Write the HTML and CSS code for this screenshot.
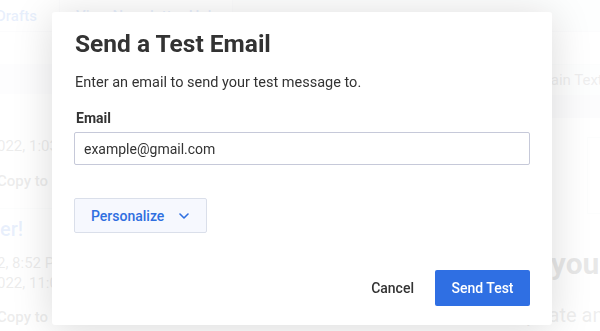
FILE: index.html
```html
<!DOCTYPE html>
<html lang="en">
<head>
    <meta charset="UTF-8">
    <meta name="viewport" content="width=device-width, initial-scale=1.0">
    <title>Send a Test Email</title>
    <link rel="stylesheet" href="styles.css">
</head>
<body>
    <div class="page">
        <div class="topbar">
            <div class="tab tab-active">Drafts</div>
            <div class="tab">View Newsletter Hub</div>
            <div class="topbar-rest"></div>
        </div>
        <div class="content">
            <div class="list">
                <div class="list-toolbar"></div>
                <div class="item">
                    <div class="item-date">022, 1:03 PM</div>
                    <div class="item-action">Copy to Drafts</div>
                </div>
                <div class="item">
                    <div class="item-title">er!</div>
                    <div class="item-date tight">2, 8:52 PM</div>
                    <div class="item-date tight">022, 11:04 AM</div>
                    <div class="item-action">Copy to Drafts</div>
                </div>
            </div>
            <div class="preview">
                <div class="preview-tabs">
                    <span>HTML</span>
                    <span>Plain Text</span>
                </div>
                <div class="preview-band"></div>
                <div class="preview-card"></div>
                <div class="preview-heading">Thank you</div>
                <div class="preview-text">update any</div>
            </div>
        </div>
    </div>

    <div class="backdrop">
        <div class="modal">
            <h2 class="modal-title">Send a Test Email</h2>
            <p class="modal-text">Enter an email to send your test message to.</p>
            <label class="field-label" for="email">Email</label>
            <input class="field-input" type="text" id="email" value="example@gmail.com">
            <button class="btn-personalize">
                Personalize
                <svg width="10" height="6" viewBox="0 0 10 6"><path d="M1 1l4 4 4-4" fill="none" stroke="#2f6fe0" stroke-width="1.6" stroke-linecap="round" stroke-linejoin="round"/></svg>
            </button>
            <div class="modal-footer">
                <button class="btn-cancel">Cancel</button>
                <button class="btn-send">Send Test</button>
            </div>
        </div>
    </div>
</body>
</html>
```

FILE: styles.css
```css
body {
    margin: 0;
    padding: 0;
    font-family: Roboto, "Liberation Sans", Arial, sans-serif;
    background-color: #fff;
    color: #333;
    height: 100vh;
    overflow: hidden;
}
.page {
    height: 100%;
}
.topbar {
    display: flex;
    height: 32px;
    border-bottom: 1px solid #dfe2ea;
    box-sizing: border-box;
}
.tab {
    display: flex;
    align-items: center;
    padding: 0 16px;
    font-size: 15px;
    font-weight: 500;
    color: #2f6fe0;
    border-right: 1px solid #dfe2ea;
    background-color: #fff;
}
.tab-active {
    margin-left: -4px;
    padding: 0 24px 0 0;
    width: 39px;
}
.topbar-rest {
    flex: 1;
    background-color: #eef0f4;
}
.content {
    display: flex;
}
.list {
    width: 545px;
    flex: none;
}
.list-toolbar {
    height: 30px;
    margin-top: 32px;
    background-color: #e9ecf2;
}
.item {
    padding: 41px 0 16px;
    border-bottom: 1px solid #e3e6ec;
    font-size: 15px;
    color: #555;
}
.item + .item {
    padding-top: 8px;
    border-bottom: none;
}
.item-title {
    font-size: 20px;
    font-weight: 500;
    color: #2f6fe0;
    margin-bottom: 12px;
}
.item-date {
    margin-left: -3px;
    line-height: 22px;
}
.item-date.tight {
    line-height: 20px;
}
.item-action {
    margin-left: -3px;
    margin-top: 13px;
    line-height: 22px;
    font-weight: 500;
}
.preview {
    flex: 1;
    padding-top: 32px;
}
.preview-tabs {
    display: flex;
    gap: 14px;
    height: 30px;
    align-items: center;
    border-top: 1px solid #e3e6ec;
    background-color: #eef0f4;
    font-size: 15px;
    color: #666;
    margin-left: -62px;
    white-space: nowrap;
}
.preview-band {
    height: 23px;
    background-color: #dfe3ea;
}
.preview-card {
    height: 75px;
    margin: 19px 0 0 42px;
    border: 1px solid #e3e6ec;
    background-color: #f8f9fb;
}
.preview-heading {
    margin-top: 32px;
    font-size: 30px;
    font-weight: 700;
    color: #333;
    margin-left: -86px;
    white-space: nowrap;
}
.preview-text {
    margin-top: 22px;
    font-size: 20px;
    color: #666;
    margin-left: -30px;
    white-space: nowrap;
}
.backdrop {
    position: fixed;
    top: 0;
    left: 0;
    right: 0;
    bottom: 0;
    display: flex;
    justify-content: center;
    align-items: flex-start;
    padding: 12px 0 0 4px;
    background-color: rgba(255, 255, 255, 0.89);
}
.modal {
    width: 500px;
    box-sizing: border-box;
    padding: 17px 22px 19px;
    background-color: #fff;
    border-radius: 3px;
    box-shadow: 0 4px 40px rgba(0, 0, 0, 0.15);
    display: flex;
    flex-direction: column;
}
.modal-title {
    margin: 0;
    font-size: 24.5px;
    line-height: 30px;
    font-weight: 700;
    color: #333;
    padding-left: 1px;
}
.modal-text {
    margin: 14px 0 0;
    font-size: 14.5px;
    line-height: 20px;
    color: #333;
    padding-left: 1px;
}
.field-label {
    margin-top: 16px;
    font-size: 14px;
    line-height: 18px;
    font-weight: 700;
    color: #333;
    padding-left: 2px;
}
.field-input {
    margin-top: 5px;
    height: 33px;
    padding: 0 9px;
    font-family: inherit;
    font-size: 14px;
    color: #333;
    border: 1px solid #c6c9d9;
    border-radius: 2px;
    box-sizing: border-box;
    outline: none;
}
.btn-personalize {
    align-self: flex-start;
    display: flex;
    align-items: center;
    gap: 15px;
    margin-top: 33px;
    height: 35px;
    padding: 0 17px 0 16px;
    font-family: inherit;
    font-size: 14px;
    font-weight: 500;
    color: #2f6fe0;
    background-color: #f6f8fe;
    border: 1px solid #dadfea;
    border-radius: 2px;
    cursor: pointer;
}
.btn-personalize svg {
    margin-top: 1px;
}
.modal-footer {
    display: flex;
    justify-content: flex-end;
    align-items: center;
    margin-top: 37px;
}
.btn-cancel {
    height: 36px;
    padding: 0 16px;
    margin-right: 5px;
    font-family: inherit;
    font-size: 14px;
    font-weight: 500;
    color: #333;
    background: none;
    border: none;
    cursor: pointer;
}
.btn-send {
    height: 36px;
    width: 95px;
    padding: 0;
    font-family: inherit;
    font-size: 14px;
    font-weight: 500;
    color: #fff;
    background-color: #2f6fe3;
    border: none;
    border-radius: 2px;
    cursor: pointer;
}
.btn-send:hover {
    background-color: #2760c8;
}
```
